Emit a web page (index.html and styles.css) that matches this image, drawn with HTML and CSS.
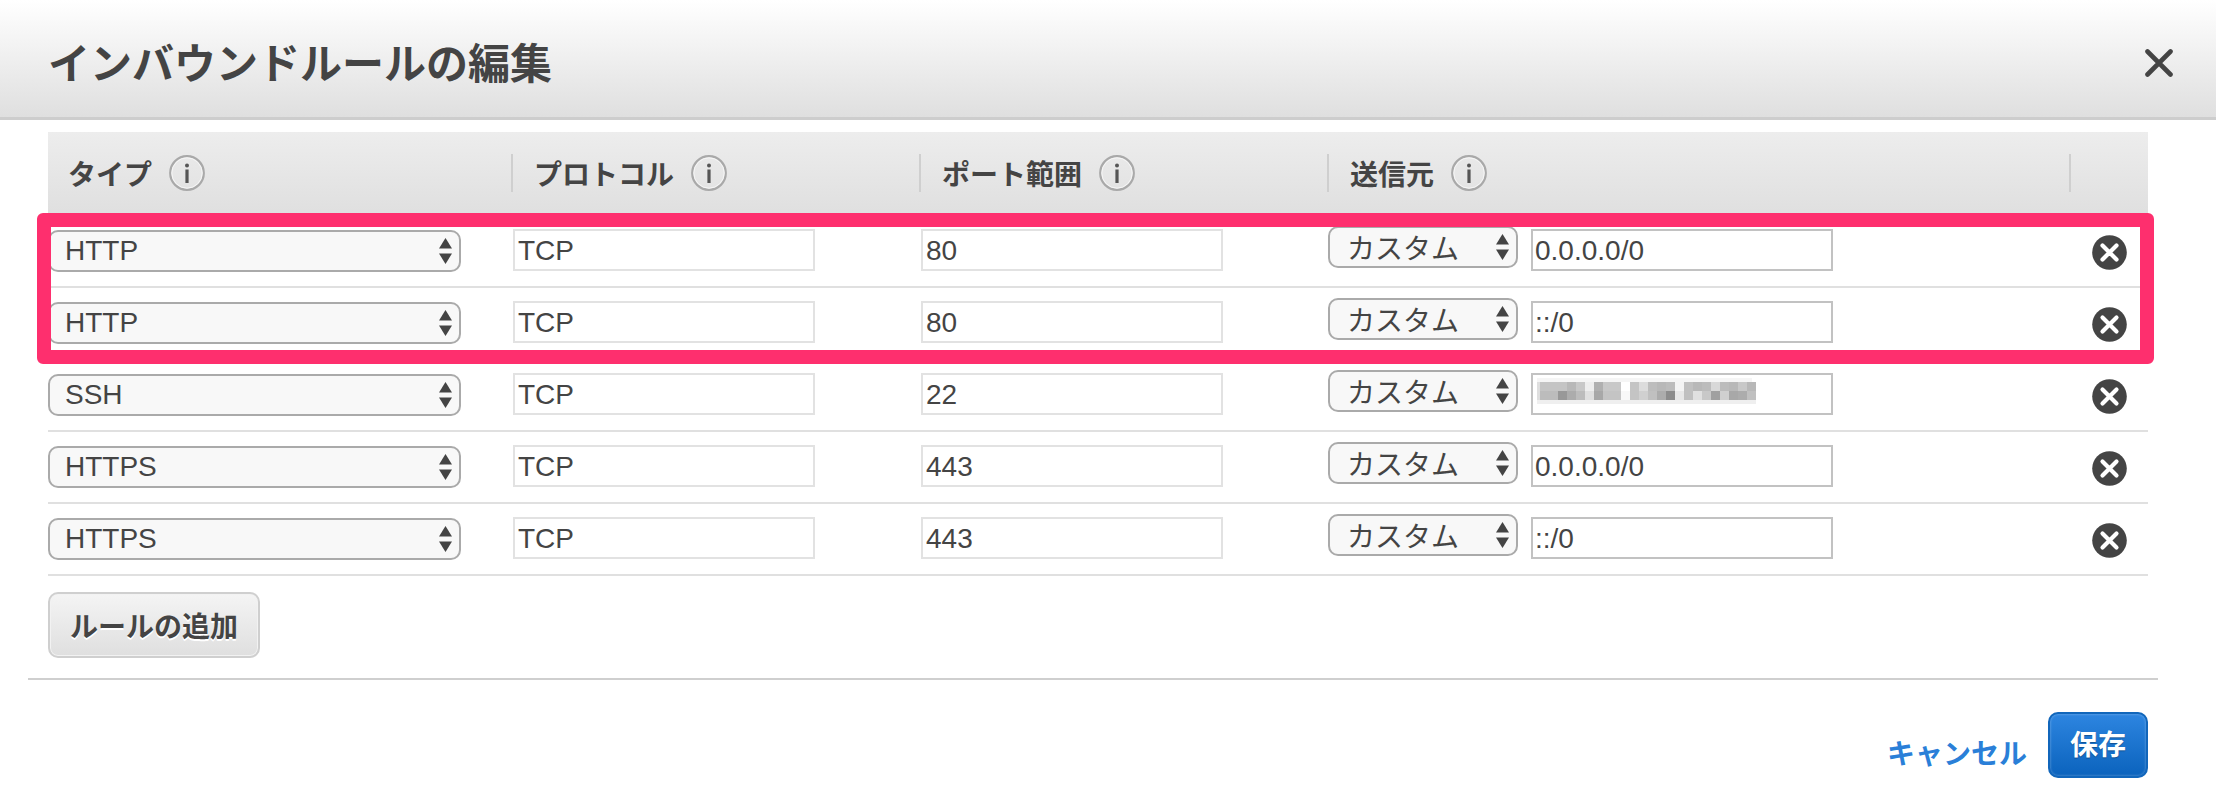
FILE: index.html
```html
<!DOCTYPE html>
<html lang="ja">
<head>
<meta charset="utf-8">
<title>インバウンドルールの編集</title>
<link rel="stylesheet" href="styles.css">
</head>
<body>
<svg class="sprites" width="0" height="0" aria-hidden="true">
  <symbol id="arrows" viewBox="0 0 13 26"><path d="M6.5 0 13 10.5H0Z"/><path d="M0 15.5H13L6.5 26Z"/></symbol>
  <symbol id="info" viewBox="0 0 36 36"><circle cx="18" cy="18" r="16.8" fill="none" stroke="#a9a9a9" stroke-width="2.2"/><circle cx="18" cy="18" r="15.2" fill="none" stroke="#f6f6f6" stroke-width="1"/><circle cx="18" cy="10.5" r="2" fill="#555"/><rect x="16.4" y="14.5" width="3.2" height="13.5" fill="#555"/></symbol>
  <symbol id="remove" viewBox="0 0 35 35"><circle cx="17.5" cy="17.5" r="17.3" fill="#444"/><path d="M10.5 10.5 24.5 24.5M24.5 10.5 10.5 24.5" stroke="#fff" stroke-width="4.2" stroke-linecap="round"/></symbol>
</svg>
<main class="dialog">
  <header class="dialog-head">
    <h1 class="dialog-title">インバウンドルールの編集</h1>
    <button class="close" aria-label="閉じる"><svg width="28" height="28" viewBox="0 0 28 28"><path d="M2.5 2.5 25.5 25.5M25.5 2.5 2.5 25.5" stroke="#444" stroke-width="4.6" stroke-linecap="round"/></svg></button>
  </header>
  <section class="rules">
    <div class="rules-inner">
      <div class="row head">
        <div class="th first">タイプ<svg class="info"><use href="#info"/></svg></div>
        <div class="th">プロトコル<svg class="info"><use href="#info"/></svg></div>
        <div class="th">ポート範囲<svg class="info"><use href="#info"/></svg></div>
        <div class="th">送信元<svg class="info"><use href="#info"/></svg></div>
        <div class="th"></div>
      </div>
      <div class="row">
        <div class="cell"><span class="sel type"><select><option>HTTP</option></select><svg class="arrows"><use href="#arrows"/></svg></span></div>
        <div class="cell c2"><input class="ro" value="TCP" readonly></div>
        <div class="cell c3"><input class="ro" value="80" readonly></div>
        <div class="cell c4"><span class="sel src"><select><option>カスタム</option></select><svg class="arrows"><use href="#arrows"/></svg></span><input class="cidr" value="0.0.0.0/0"></div>
        <div class="cell c5"><svg class="remove"><use href="#remove"/></svg></div>
      </div>
      <div class="row">
        <div class="cell"><span class="sel type"><select><option>HTTP</option></select><svg class="arrows"><use href="#arrows"/></svg></span></div>
        <div class="cell c2"><input class="ro" value="TCP" readonly></div>
        <div class="cell c3"><input class="ro" value="80" readonly></div>
        <div class="cell c4"><span class="sel src"><select><option>カスタム</option></select><svg class="arrows"><use href="#arrows"/></svg></span><input class="cidr" value="::/0"></div>
        <div class="cell c5"><svg class="remove"><use href="#remove"/></svg></div>
      </div>
      <div class="row">
        <div class="cell"><span class="sel type"><select><option>SSH</option></select><svg class="arrows"><use href="#arrows"/></svg></span></div>
        <div class="cell c2"><input class="ro" value="TCP" readonly></div>
        <div class="cell c3"><input class="ro" value="22" readonly></div>
        <div class="cell c4"><span class="sel src"><select><option>カスタム</option></select><svg class="arrows"><use href="#arrows"/></svg></span><span class="cidr masked"><svg class="mosaic" width="240" height="30" viewBox="0 0 240 30" shape-rendering="crispEdges" aria-hidden="true"><rect x="0" y="0" width="215" height="4" fill="#f5f5f5"/><rect x="0" y="22" width="219" height="4" fill="#efefef"/><rect x="0" y="4" width="3" height="18" fill="#dedede"/><g id="r1"><rect x="3" y="4" width="27" height="9" fill="#c4c4c4"/><rect x="30" y="4" width="9" height="9" fill="#b8b8b8"/><rect x="39" y="4" width="9" height="9" fill="#c8c8c8"/><rect x="48" y="4" width="9" height="9" fill="#eee"/><rect x="57" y="4" width="9" height="9" fill="#b0b0b0"/><rect x="66" y="4" width="18" height="9" fill="#c8c8c8"/><rect x="84" y="4" width="9" height="9" fill="#fff"/><rect x="93" y="4" width="9" height="9" fill="#c4c4c4"/><rect x="102" y="4" width="9" height="9" fill="#dcdcdc"/><rect x="111" y="4" width="9" height="9" fill="#bdbdbd"/><rect x="120" y="4" width="9" height="9" fill="#b8b8b8"/><rect x="129" y="4" width="9" height="9" fill="#bcbcbc"/><rect x="138" y="4" width="9" height="9" fill="#f4f4f4"/><rect x="147" y="4" width="9" height="9" fill="#c0c0c0"/><rect x="156" y="4" width="9" height="9" fill="#b8b8b8"/><rect x="165" y="4" width="9" height="9" fill="#bcbcbc"/><rect x="174" y="4" width="9" height="9" fill="#d8d8d8"/><rect x="183" y="4" width="9" height="9" fill="#bcbcbc"/><rect x="192" y="4" width="9" height="9" fill="#b8b8b8"/><rect x="201" y="4" width="9" height="9" fill="#c8c8c8"/><rect x="210" y="4" width="9" height="9" fill="#b8b8b8"/></g><g id="r2"><rect x="3" y="13" width="18" height="9" fill="#bcbcbc"/><rect x="21" y="13" width="9" height="9" fill="#989898"/><rect x="30" y="13" width="9" height="9" fill="#acacac"/><rect x="39" y="13" width="9" height="9" fill="#bcbcbc"/><rect x="48" y="13" width="9" height="9" fill="#e0e0e0"/><rect x="57" y="13" width="9" height="9" fill="#a8a8a8"/><rect x="66" y="13" width="18" height="9" fill="#c4c4c4"/><rect x="84" y="13" width="9" height="9" fill="#f8f8f8"/><rect x="93" y="13" width="9" height="9" fill="#c4c4c4"/><rect x="102" y="13" width="9" height="9" fill="#d0d0d0"/><rect x="111" y="13" width="9" height="9" fill="#c0c0c0"/><rect x="120" y="13" width="9" height="9" fill="#acacac"/><rect x="129" y="13" width="9" height="9" fill="#8c8c8c"/><rect x="138" y="13" width="9" height="9" fill="#e8e8e8"/><rect x="147" y="13" width="9" height="9" fill="#c0c0c0"/><rect x="156" y="13" width="9" height="9" fill="#e0e0e0"/><rect x="165" y="13" width="9" height="9" fill="#c8c8c8"/><rect x="174" y="13" width="9" height="9" fill="#a0a0a0"/><rect x="183" y="13" width="9" height="9" fill="#d0d0d0"/><rect x="192" y="13" width="9" height="9" fill="#a8a8a8"/><rect x="201" y="13" width="9" height="9" fill="#acacac"/><rect x="210" y="13" width="9" height="9" fill="#c0c0c0"/></g></svg></span></div>
        <div class="cell c5"><svg class="remove"><use href="#remove"/></svg></div>
      </div>
      <div class="row">
        <div class="cell"><span class="sel type"><select><option>HTTPS</option></select><svg class="arrows"><use href="#arrows"/></svg></span></div>
        <div class="cell c2"><input class="ro" value="TCP" readonly></div>
        <div class="cell c3"><input class="ro" value="443" readonly></div>
        <div class="cell c4"><span class="sel src"><select><option>カスタム</option></select><svg class="arrows"><use href="#arrows"/></svg></span><input class="cidr" value="0.0.0.0/0"></div>
        <div class="cell c5"><svg class="remove"><use href="#remove"/></svg></div>
      </div>
      <div class="row">
        <div class="cell"><span class="sel type"><select><option>HTTPS</option></select><svg class="arrows"><use href="#arrows"/></svg></span></div>
        <div class="cell c2"><input class="ro" value="TCP" readonly></div>
        <div class="cell c3"><input class="ro" value="443" readonly></div>
        <div class="cell c4"><span class="sel src"><select><option>カスタム</option></select><svg class="arrows"><use href="#arrows"/></svg></span><input class="cidr" value="::/0"></div>
        <div class="cell c5"><svg class="remove"><use href="#remove"/></svg></div>
      </div>
      <div class="highlight"></div>
    </div>
    <button class="add">ルールの追加</button>
  </section>
  <footer class="dialog-foot">
    <a class="cancel" href="#">キャンセル</a>
    <button class="save">保存</button>
  </footer>
</main>
</body>
</html>
```
FILE: styles.css
```css
* { box-sizing: border-box; }
html, body { margin: 0; padding: 0; background: #fff; }
body {
  width: 2216px;
  height: 800px;
  overflow: hidden;
  color: #444;
  font-family: "Liberation Sans", "Noto Sans CJK JP", sans-serif;
  font-size: 28px;
}
.sprites { position: absolute; }
.dialog { display: flex; flex-direction: column; height: 800px; }

.dialog-head {
  height: 120px;
  flex: none;
  display: flex;
  align-items: center;
  justify-content: space-between;
  padding: 0 43px 0 48px;
  background: linear-gradient(#ffffff, #dfdfdf);
  border-bottom: 3px solid #cdcdcd;
}
.dialog-title { margin: 13px 0 0; font-size: 42px; font-weight: 700; line-height: 60px; color: #444; }
.close { padding: 0; border: 0; background: none; display: flex; margin-top: 8px; }

.rules { flex: none; padding: 12px 68px 0 48px; height: 558px; }
.rules-inner { position: relative; }

.row {
  display: grid;
  grid-template-columns: 463px 408px 408px 742px 79px;
  height: 72px;
  border-bottom: 2px solid #e0e0e0;
}
.row.head {
  height: 84px;
  padding-top: 22px;
  border-bottom: 0;
  background: linear-gradient(#ededed, #dfdfdf);
}
.th {
  height: 38px;
  display: flex;
  align-items: center;
  gap: 17px;
  padding-left: 21px;
  border-left: 2px solid #cfcfcf;
  font-weight: 700;
  color: #444;
}
.th.first { border-left: 0; padding-left: 20px; }
.info { width: 36px; height: 36px; flex: none; }

.cell { padding-top: 13px; display: flex; align-items: flex-start; }
.c2 { padding-left: 2px; }
.c3 { padding-left: 2px; }
.c4 { padding-left: 1px; gap: 13px; }
.c5 { padding-top: 19px; padding-left: 23px; }

.sel { position: relative; display: block; flex: none; height: 42px; }
.sel.type { width: 413px; margin-top: 1px; }
.sel.src { width: 190px; margin-top: -3px; }
.sel select {
  appearance: none;
  -webkit-appearance: none;
  display: block;
  width: 100%;
  height: 42px;
  margin: 0;
  padding: 0 30px 2px 15px;
  border: 2px solid #aaa;
  border-radius: 10px;
  background: #f8f8f8;
  color: #444;
  font: inherit;
}
.sel.src select { padding: 5px 30px 0 17px; }
.arrows { position: absolute; right: 9px; top: 8px; width: 13px; height: 26px; fill: #444; pointer-events: none; }

.ro, .cidr {
  display: block;
  flex: none;
  width: 302px;
  height: 42px;
  margin: 0;
  padding: 2px 3px 0;
  background: #fff;
  color: #444;
  font: inherit;
  outline: 0;
}
.ro { border: 2px solid #e2e2e2; }
.cidr { border: 2px solid #c2c2c2; padding-left: 2px; }
.masked { overflow: hidden; padding: 3px 0 0 4px; }
.mosaic { display: block; filter: blur(0.7px); }
.remove { width: 35px; height: 35px; display: block; }

.highlight {
  position: absolute;
  left: -11px;
  top: 81px;
  width: 2117px;
  height: 151px;
  border: 14px solid #fe2f6e;
  border-radius: 6px;
  pointer-events: none;
}

.add {
  display: block;
  width: 212px;
  height: 66px;
  margin: 16px 0 0;
  padding: 0;
  border: 2px solid #cfcfcf;
  border-radius: 10px;
  background: linear-gradient(#f4f4f4, #dfdfdf);
  box-shadow: inset 0 0 0 1px #f2f2f2;
  color: #444;
  font: inherit;
  font-weight: 700;
  text-shadow: 0 2px 0 #fff;
}

.dialog-foot {
  margin: 0 58px 0 28px;
  flex: none;
  border-top: 2px solid #cfcfcf;
  padding: 32px 10px 0 0;
  display: flex;
  justify-content: flex-end;
  align-items: flex-start;
  gap: 21px;
}
.cancel { margin-top: 23px; line-height: 40px; color: #2a7fd8; font-weight: 700; text-decoration: none; }
.save {
  width: 100px;
  height: 66px;
  padding: 0 0 4px;
  border: 2px solid #1166bb;
  border-radius: 10px;
  background: linear-gradient(#2d85e0, #0b63bd);
  box-shadow: inset 0 0 2px 1px rgba(255, 255, 255, 0.18);
  color: #fff;
  font: inherit;
  font-weight: 700;
  text-shadow: 0 1px 1px rgba(0, 0, 0, 0.3);
}
```
